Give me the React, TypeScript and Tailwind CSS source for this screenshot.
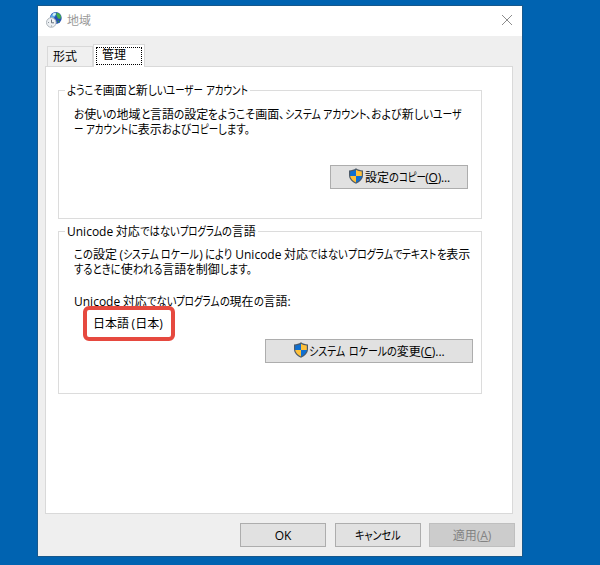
import type { ReactNode } from "react"

const RUNS = /([\u3001-\u309f]+|[\u30a0-\u30ff]+)/
const KATAKANA = /^[\u30a0-\u30ff]/

// kana are set narrower than kanji, as in the Windows UI fonts
function Jp({ text, hira = 0.86, kata = 0.79 }: { text: string; hira?: number; kata?: number }) {
    return (
        <span className="whitespace-pre">
            {text.split(RUNS).map((part, i) => {
                if (i % 2 === 0) return part
                const scale = KATAKANA.test(part) ? kata : hira
                return (
                    <span
                        key={i}
                        ref={(el) => {
                            if (el) el.style.marginRight = `${-el.offsetWidth * (1 - scale)}px`
                        }}
                        className="inline-block origin-left [font-feature-settings:'palt']"
                        style={{ transform: `scaleX(${scale})` }}
                    >
                        {part}
                    </span>
                )
            })}
        </span>
    )
}

function Shield() {
    return (
        <svg width="16" height="16" viewBox="0 0 16 16" className="-mt-[3px] shrink-0">
            <path d="M8 .3C6 1.7 3.800 2.300 1 2.400V7c0 4.200 3 6.900 7 8.700 4-1.800 7-4.500 7-8.700V2.400C12.200 2.300 10 1.700 8 .3z" fill="#4d5a68" />
            <path d="M8 1.700C6.300 2.800 4.400 3.300 2.200 3.500V8H8z" fill="#0f6fd1" />
            <path d="M8 1.700c1.700 1.100 3.600 1.600 5.800 1.800V8H8z" fill="#ffc13a" />
            <path d="M2.200 8c.4 3 2.700 4.900 5.800 6.500V8z" fill="#ffc13a" />
            <path d="M13.800 8c-.4 3-2.700 4.900-5.800 6.500V8z" fill="#0f6fd1" />
        </svg>
    )
}

function RegionIcon() {
    return (
        <svg width="16" height="16" viewBox="0 0 16 16" className="-mt-[2px]">
            <circle cx="9.800" cy="6" r="5.900" fill="#2350b4" />
            <path d="M4.500 4.500C5.500 2 7.500.5 10 .4L9.500 4 7.500 6.500 5 6z" fill="#5aa8e8" />
            <path d="M7 1.500l2.500-.8.5 1.600L8.300 4 6.500 3.500z" fill="#d4f2f4" />
            <path d="M10.500.8c2 .2 3.500 1.500 4.500 3.200L14.500 7 12 6.500 10.500 3.500z" fill="#43ad4a" />
            <path d="M11.500 8.500l2 .5-1.500 2z" fill="#35983f" />
            <circle cx="5.300" cy="10.500" r="4.800" fill="#eef1f4" stroke="#adb4ba" strokeWidth="1" />
            <path d="M5.500 7.500v3.300h2.500" fill="none" stroke="#69747e" strokeWidth="1" />
            <path d="M2 10.500h1M5.500 13.500v1" stroke="#8b949b" strokeWidth="1" />
        </svg>
    )
}

function Button({ className, disabled, children }: { className: string; disabled?: boolean; children: ReactNode }) {
    return (
        <button
            disabled={disabled}
            className={`flex h-6 items-center justify-center border ${disabled ? "border-[#bfbfbf] bg-[#cccccc] text-[#838383]" : "border-[#adadad] bg-[#e1e1e1]"} ${className}`}
        >
            {children}
        </button>
    )
}

export default function App() {
    return (
        <div className="h-[565px] w-[600px] overflow-hidden bg-[#0063b1] pl-[38px] pt-[6px] font-['Open_Sans','Noto_Sans_CJK_JP',sans-serif] text-[12px] leading-[15px] text-black [word-spacing:-0.5px]">
            <div className="flex h-[550px] w-[484px] flex-col bg-[#efefef] shadow-[0_0_0_1px_#17588c]">
                <div className="flex h-[30px] shrink-0 items-center bg-white pl-2">
                    <RegionIcon />
                    <div className="-mt-px ml-[5px] text-[#999999]"><Jp text="地域" /></div>
                    <svg width="10" height="10" viewBox="0 0 10 10" className="-mt-[2px] ml-auto mr-[10px]">
                        <path d="M0 0l10 10M10 0L0 10" stroke="#8c8c8c" strokeWidth="1" />
                    </svg>
                </div>
                <div className="flex h-[30px] shrink-0 items-end pl-[9px]">
                    <div className="h-5 w-[46px] border border-b-0 border-[#d9d9d9] bg-[#f0f0f0] pl-[5px] pt-[2px]">
                        <Jp text="形式" />
                    </div>
                    <div className="relative -mb-px h-[23px] w-[52px] border border-b-0 border-[#d9d9d9] bg-white p-[2px]">
                        <div className="h-[18px] w-[46px] border border-dotted border-black pl-[5px] leading-[14px]">
                            <Jp text="管理" />
                        </div>
                    </div>
                </div>
                <div className="ml-[7px] flex h-[448px] w-[468px] shrink-0 flex-col gap-[5px] border border-[#d9d9d9] bg-white pl-3 pt-4">
                    <fieldset className="h-[136px] w-[424px] min-w-0 border border-[#dcdcdc] pl-[15px]">
                        <legend className="-ml-[9px] h-[15px] px-[2px]">
                            <Jp text="ようこそ画面と新しいユーザー アカウント" />
                        </legend>
                        <div className="pt-[9px]">
                            <Jp text="お使いの地域と言語の設定をようこそ画面、システム アカウント、および新しいユーザ" hira={0.89} kata={0.82} />
                        </div>
                        <div>
                            <Jp text="ー アカウントに表示およびコピーします。" />
                        </div>
                        <Button className="ml-[256px] mt-7 w-[138px]">
                            <Shield />
                            <div className="ml-px tracking-[-0.2px]"><Jp text="設定のコピー(" /><u>O</u>)...</div>
                        </Button>
                    </fieldset>
                    <fieldset className="h-[170px] w-[424px] min-w-0 border border-[#dcdcdc] pl-[15px]">
                        <legend className="-ml-[9px] h-[15px] px-[2px]">
                            <Jp text="Unicode 対応ではないプログラムの言語" kata={0.77} />
                        </legend>
                        <div className="pt-2">
                            <Jp text="この設定 (システム ロケール) により Unicode 対応ではないプログラムでテキストを表示" kata={0.82} />
                        </div>
                        <div>
                            <Jp text="するときに使われる言語を制御します。" />
                        </div>
                        <div className="mt-[17px]">
                            <Jp text="Unicode 対応でないプログラムの現在の言語:" />
                        </div>
                        <div className="relative -mt-[3px] ml-[9px] h-[35px] w-[92px] rounded-[6px] border-4 border-[#e6493f] pl-[6px] pt-[6px]">
                            <Jp text="日本語 (日本)" />
                        </div>
                        <Button className="-mt-[2px] ml-[191px] w-[208px]">
                            <Shield />
                            <div><Jp text="システム ロケールの変更(" kata={0.83} /><u>C</u>)...</div>
                        </Button>
                    </fieldset>
                </div>
                <div className="mt-[9px] flex pl-[202px]">
                    <Button className="w-[86px]">OK</Button>
                    <Button className="ml-[9px] w-[86px]"><Jp text="キャンセル" kata={0.84} /></Button>
                    <Button disabled className="ml-2 w-[86px]"><Jp text="適用(" /><u>A</u>)</Button>
                </div>
            </div>
        </div>
    )
}
